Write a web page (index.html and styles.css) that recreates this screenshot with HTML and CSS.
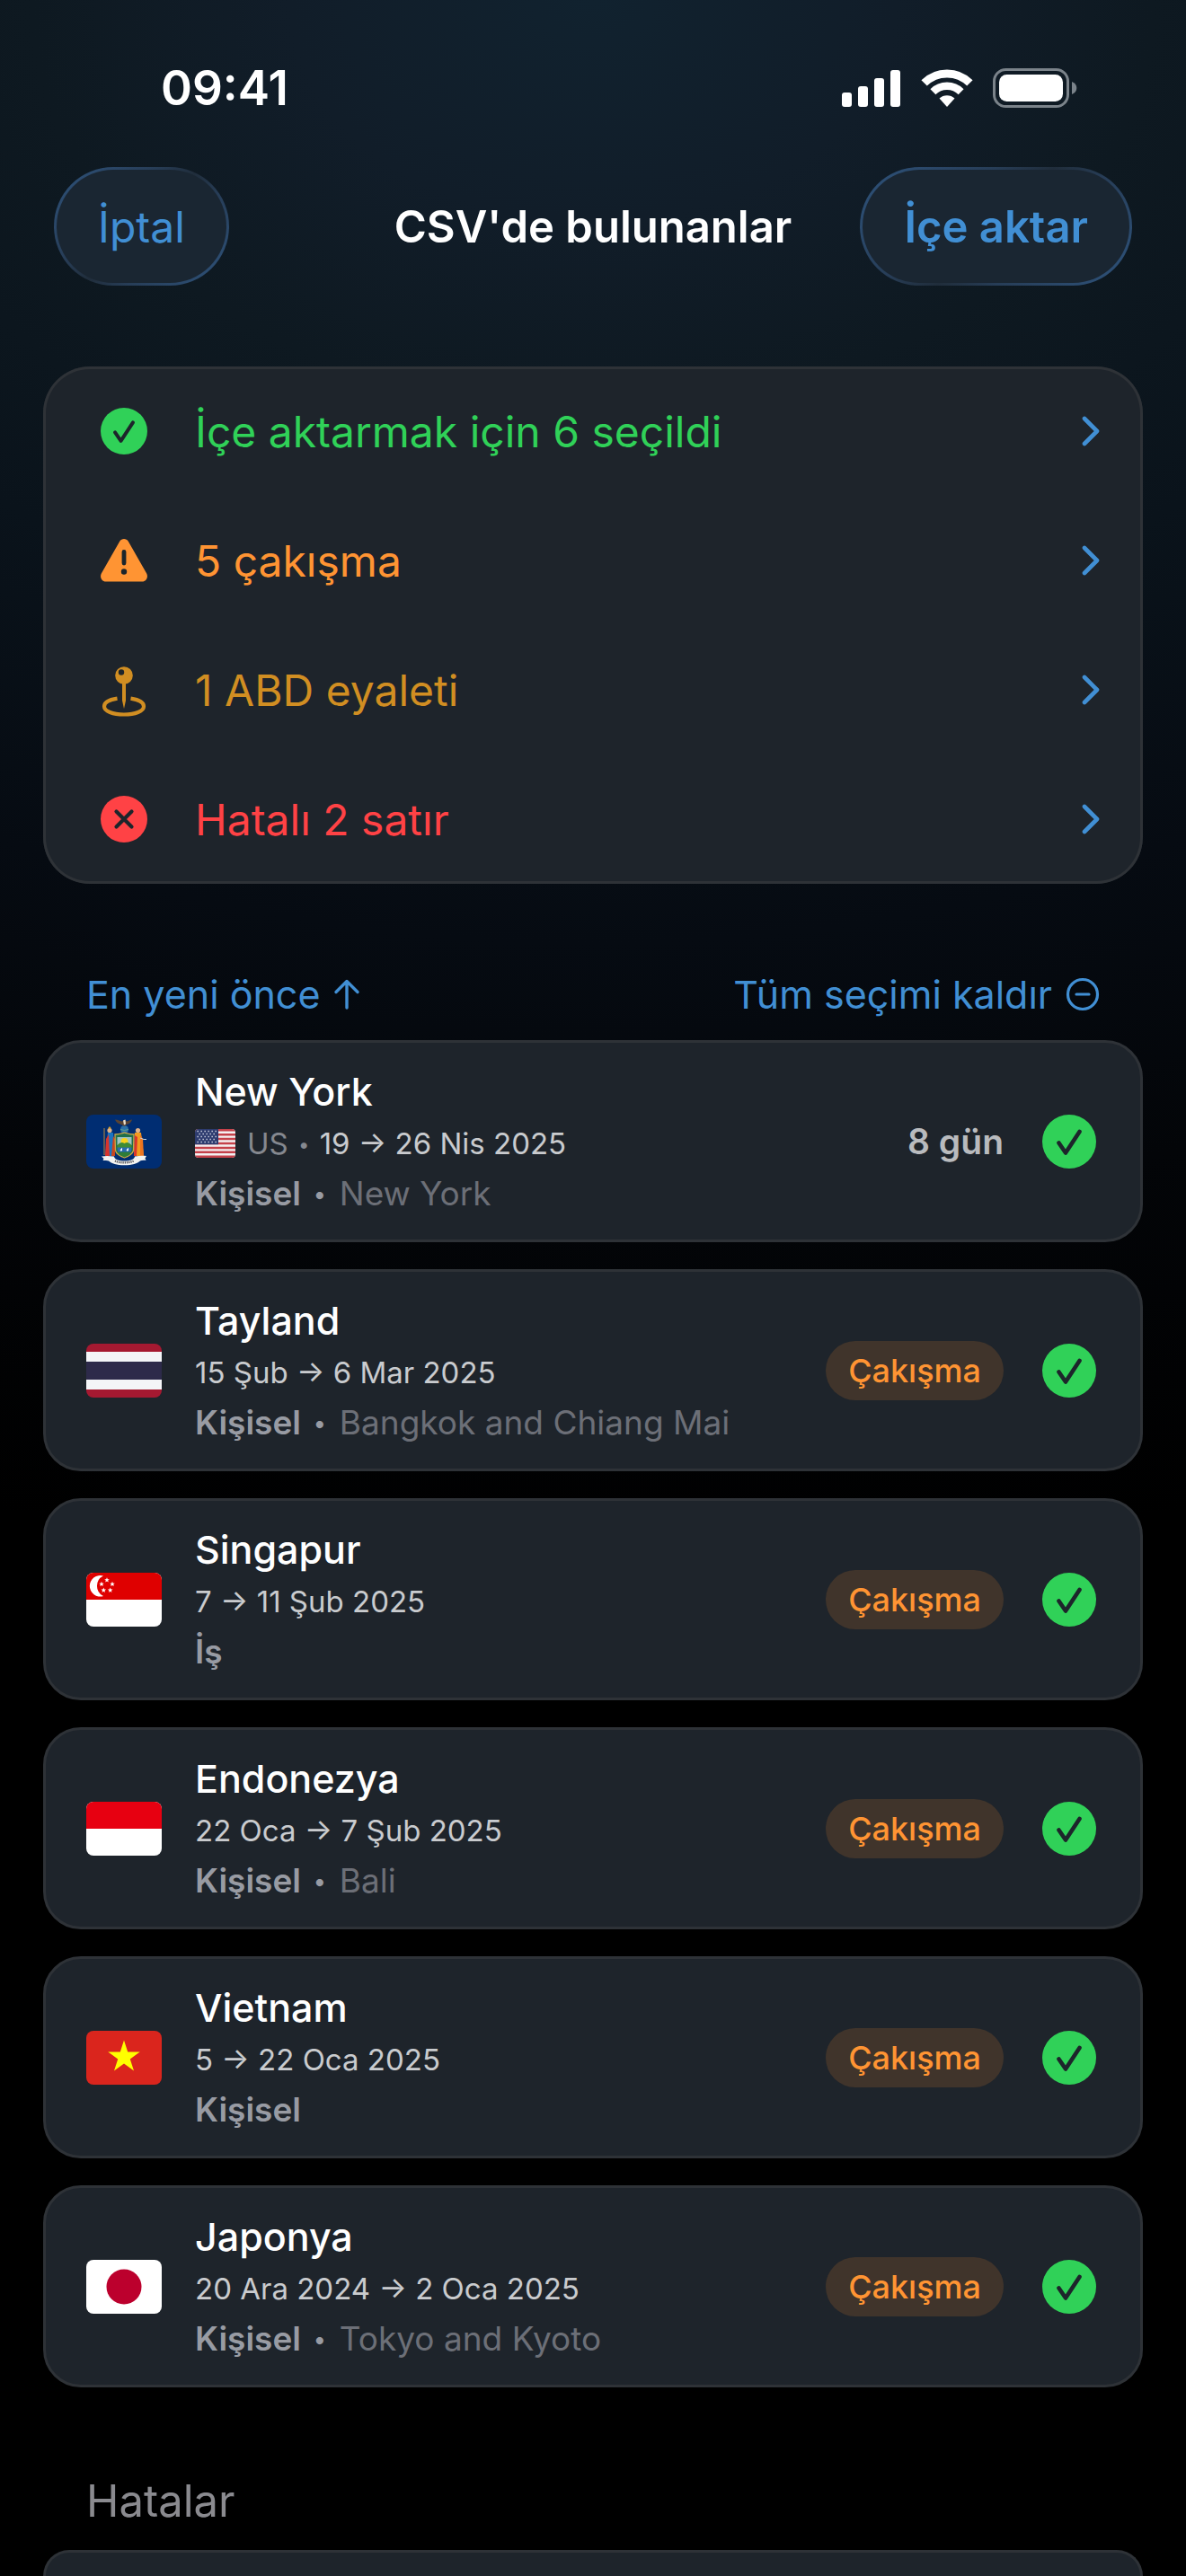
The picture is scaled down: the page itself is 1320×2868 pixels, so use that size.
FILE: index.html
```html
<!DOCTYPE html>
<html lang="tr">
<head>
    <meta charset="UTF-8">
    <meta name="viewport" content="width=device-width, initial-scale=1.0">
    <title>CSV'de bulunanlar</title>
    <link rel="stylesheet" href="styles.css">
</head>
<body>
    <svg class="defs" aria-hidden="true">
        <symbol id="check" viewBox="0 0 60 60">
            <circle cx="30" cy="30" r="30" fill="#30d158"/>
            <path d="M18.5 31.5 26 42.5 41.5 19" fill="none" stroke="#1d252b" stroke-width="4.6" stroke-linecap="round" stroke-linejoin="round"/>
        </symbol>
        <symbol id="chevron" viewBox="0 0 20 34">
            <path d="M3 3 17 17 3 31" fill="none" stroke="#418fd4" stroke-width="4.6" stroke-linecap="round" stroke-linejoin="round"/>
        </symbol>
    </svg>

    <div class="status-bar">
        <span class="time">09:41</span>
        <div class="status-icons">
            <svg width="66" height="42" viewBox="0 0 66 42" fill="#fff">
                <rect x="0" y="26" width="11" height="16" rx="3"/>
                <rect x="18" y="19" width="11" height="23" rx="3"/>
                <rect x="36" y="10" width="11" height="32" rx="3"/>
                <rect x="54" y="1" width="11" height="41" rx="3"/>
            </svg>
            <svg width="58" height="42" viewBox="0 0 58 42">
                <path d="M3.6 15.4a36 36 0 0 1 50.8 0" fill="none" stroke="#fff" stroke-width="9"/>
                <path d="M13.4 25.2a22.2 22.2 0 0 1 31.2 0" fill="none" stroke="#fff" stroke-width="8.4"/>
                <path d="M20.5 32.6a12.2 12.2 0 0 1 17 0L29 42z" fill="#fff"/>
            </svg>
            <svg width="94" height="44" viewBox="0 0 94 44">
                <rect x="1.5" y="1.5" width="82" height="41" rx="13" fill="none" stroke="#7b838a" stroke-width="3"/>
                <rect x="7" y="7" width="71" height="30" rx="8.5" fill="#fff"/>
                <path d="M88 15c3.4 1.2 5.3 4 5.3 7s-1.9 5.8-5.3 7z" fill="#7b838a"/>
            </svg>
        </div>
    </div>

    <header class="nav">
        <button class="nav-btn" type="button">İptal</button>
        <h1>CSV'de bulunanlar</h1>
        <button class="nav-btn nav-btn-main" type="button">İçe aktar</button>
    </header>

    <main>
        <section class="summary">
            <button class="summary-row green" type="button">
                <svg class="summary-icon" width="52" height="52"><use href="#check"/></svg>
                <span>İçe aktarmak için 6 seçildi</span>
                <svg width="20" height="34"><use href="#chevron"/></svg>
            </button>
            <button class="summary-row orange" type="button">
                <svg class="summary-icon" width="54" height="48" viewBox="0 0 54 48">
                    <path d="M22.2 2.8c2.1-3.7 7.5-3.7 9.6 0l20.400 35.800c2.100 3.700-.5 8.900-5 8.900H6.800c-4.500 0-7.100-5.200-5-8.900z" fill="#ff9433"/>
                    <path d="M27 14.500V27" stroke="#1d252b" stroke-width="4.800" stroke-linecap="round"/>
                    <circle cx="27" cy="36.500" r="3.200" fill="#1d252b"/>
                </svg>
                <span>5 çakışma</span>
                <svg width="20" height="34"><use href="#chevron"/></svg>
            </button>
            <button class="summary-row amber" type="button">
                <svg class="summary-icon" width="54" height="60" viewBox="0 0 54 60">
                    <path d="M19.500 39.600C10 41 5 44.300 5 48.500 5 54 14.500 57.500 27 57.500S49 54 49 48.500c0-4.200-5-7.500-14.500-8.900" fill="none" stroke="#d18e22" stroke-width="4.200"/>
                    <path d="M25 22h4v20l-2 9-2-9z" fill="#d18e22"/>
                    <circle cx="27" cy="14" r="9.800" fill="#d18e22"/>
                    <circle cx="24" cy="10.500" r="3.200" fill="#1d252b"/>
                </svg>
                <span>1 ABD eyaleti</span>
                <svg width="20" height="34"><use href="#chevron"/></svg>
            </button>
            <button class="summary-row red" type="button">
                <svg class="summary-icon" width="52" height="52" viewBox="0 0 52 52">
                    <circle cx="26" cy="26" r="26" fill="#ff4245"/>
                    <path d="M17.500 17.500l17 17M34.500 17.500l-17 17" stroke="#1d252b" stroke-width="4.200" stroke-linecap="round"/>
                </svg>
                <span>Hatalı 2 satır</span>
                <svg width="20" height="34"><use href="#chevron"/></svg>
            </button>
        </section>

        <div class="toolbar">
            <button type="button">En yeni önce
                <svg width="30" height="34" viewBox="0 0 30 34" fill="none" stroke="#418fd4" stroke-width="3.400" stroke-linecap="round" stroke-linejoin="round"><path d="M15 32V2.500M3 14.500l12-12 12 12"/></svg>
            </button>
            <button type="button">Tüm seçimi kaldır
                <svg width="38" height="38" viewBox="0 0 38 38" fill="none" stroke="#418fd4" stroke-width="3.200" stroke-linecap="round"><circle cx="19" cy="19" r="16.500"/><path d="M12 19h14"/></svg>
            </button>
        </div>

        <ul class="trips">
            <li class="card">
                <svg class="flag" viewBox="0 0 84 60">
                    <rect width="84" height="60" fill="#002d72"/>
                    <!-- supporters -->
                    <path d="M20 15v30" stroke="#b98a3a" stroke-width="1"/>
                    <path d="M24 20l6 0 2 26H21z" fill="#1c74c0"/>
                    <path d="M22 27l3-5 1 24h-5z" fill="#d8342c"/>
                    <path d="M30 24l2 3v19h-4z" fill="#c9461f"/>
                    <circle cx="26" cy="17.500" r="2.600" fill="#e0b28a"/>
                    <path d="M24 15.500l2-2.500 2 2.500z" fill="#d9a32b"/>
                    <path d="M54 20h7l3 26H53z" fill="#f19a1f"/>
                    <path d="M54 23l3 2-1 21h-3z" fill="#d8342c"/>
                    <path d="M60 22l3 5 1 19h-4z" fill="#ec7420"/>
                    <circle cx="57.500" cy="17.500" r="2.600" fill="#e0b28a"/>
                    <path d="M60 26l4 1.500M64 27.500h3" stroke="#cfd6df" stroke-width="1"/>
                    <!-- globe and eagle -->
                    <circle cx="42.500" cy="16.500" r="4.500" fill="#2a71a8"/>
                    <path d="M38 16.500q4.500 2 9 0" fill="none" stroke="#63a08b" stroke-width="1"/>
                    <path d="M32 5.500c3 0 5 1.500 8 2l2.500-2 2.500 2c3-.5 4-2 6-2-1 3-3 5-6 5.500L42.500 13 39 11c-3-.5-6-2.500-7-5.500z" fill="#5a4332"/>
                    <path d="M41 6.500l2.500-1 .5 5-2 1z" fill="#e8dfcd"/>
                    <!-- shield -->
                    <path d="M32 22c4 0 7-1 10.500-2 3.500 1 6.500 2 10.500 2l-.5 18c-1 4-5 6-10 8-5-2-9-4-10-8z" fill="#1f6f4a" stroke="#c9a648" stroke-width="1.300"/>
                    <path d="M34.500 25h16v9h-16z" fill="#9fc4c2"/>
                    <circle cx="42.500" cy="30" r="4" fill="#f8d21c"/>
                    <path d="M34.500 34q4-5 8-2 4-3 8 2v3h-16z" fill="#3f8b35"/>
                    <path d="M34.500 36.500h16l-.5 5h-15z" fill="#2b6cae"/>
                    <path d="M38 40l1.500-2.500v2.500zM45 40l1.500-2.500v2.500z" fill="#fff" stroke="#fff"/>
                    <path d="M35 42h15l-2 3-5.500 2.200L37 45z" fill="#2f7d38"/>
                    <!-- motto ribbon -->
                    <path d="M17 46.500c5-1 9-.5 14 0 0 3 5 5 11.500 5S54 49.500 54 46.500c5-.5 8-1 13-.5l-1.500 2.500 1 2.500c-3-.5-5 0-6.500.500-3 3-9 4.800-17.500 4.800S28 54.500 25 51.500c-2-.5-4-.5-6.500-.5l1-2z" fill="#f3f3f1"/>
                    <path d="M32 51.500c5 2.600 15 2.600 21 0" fill="none" stroke="#4b4b50" stroke-width="2.200" stroke-dasharray="1.200 1"/>
                </svg>
                <div class="info">
                    <h2>New York</h2>
                    <p class="dates">
                        <svg class="mini-flag" viewBox="0 0 45 32">
                            <rect width="45" height="32" fill="#f4f1f2"/>
                            <path d="M0 1.200h45M0 6.200h45M0 11.100h45M0 16h45M0 20.900h45M0 25.800h45M0 30.800h45" stroke="#c5414a" stroke-width="2.460"/>
                            <rect width="26" height="17.200" fill="#2d3b6e"/>
                            <path d="M2.500 2.500h22M2.500 8.500h22M2.500 14.500h22" stroke="#dfe2ee" stroke-width="1.300" stroke-dasharray="1.300 2.700"/>
                            <path d="M4.500 5.500h18M4.500 11.500h18" stroke="#dfe2ee" stroke-width="1.300" stroke-dasharray="1.300 2.700"/>
                        </svg>
                        <span><span class="country">US <span class="dot">•</span></span> 19 → 26 Nis 2025</span>
                    </p>
                    <p class="note"><strong>Kişisel <span class="dot">•</span></strong> New York</p>
                </div>
                <span class="days">8 gün</span>
                <label class="tick"><input type="checkbox" checked aria-label="New York"><svg width="60" height="60"><use href="#check"/></svg></label>
            </li>
            <li class="card">
                <svg class="flag" viewBox="0 0 84 60">
                    <rect width="84" height="60" fill="#a51931"/>
                    <rect y="9" width="84" height="42" fill="#f4f5f8"/>
                    <rect y="20" width="84" height="20" fill="#2d2a4a"/>
                </svg>
                <div class="info">
                    <h2>Tayland</h2>
                    <p class="dates">15 Şub → 6 Mar 2025</p>
                    <p class="note"><strong>Kişisel <span class="dot">•</span></strong> Bangkok and Chiang Mai</p>
                </div>
                <span class="badge">Çakışma</span>
                <label class="tick"><input type="checkbox" checked aria-label="Tayland"><svg width="60" height="60"><use href="#check"/></svg></label>
            </li>
            <li class="card">
                <svg class="flag" viewBox="0 0 84 60">
                    <rect width="84" height="60" fill="#fff"/>
                    <rect width="84" height="30" fill="#df0000"/>
                    <path d="M19 3.500a11.800 11.800 0 1 0 0 22.600 12.600 12.600 0 0 1 0-22.600z" fill="#fff"/>
                    <g fill="#fff">
                        <path id="st" d="M23 5.300l.8 1.900 2 .1-1.600 1.300.6 2-1.800-1.100-1.800 1.100.6-2-1.600-1.300 2-.1z"/>
                        <use href="#st" x="-6" y="4.500"/>
                        <use href="#st" x="6" y="4.500"/>
                        <use href="#st" x="-3.700" y="11.300"/>
                        <use href="#st" x="3.700" y="11.300"/>
                    </g>
                </svg>
                <div class="info">
                    <h2>Singapur</h2>
                    <p class="dates">7 → 11 Şub 2025</p>
                    <p class="note"><strong>İş</strong></p>
                </div>
                <span class="badge">Çakışma</span>
                <label class="tick"><input type="checkbox" checked aria-label="Singapur"><svg width="60" height="60"><use href="#check"/></svg></label>
            </li>
            <li class="card">
                <svg class="flag" viewBox="0 0 84 60">
                    <rect width="84" height="60" fill="#fff"/>
                    <rect width="84" height="30" fill="#e70011"/>
                </svg>
                <div class="info">
                    <h2>Endonezya</h2>
                    <p class="dates">22 Oca → 7 Şub 2025</p>
                    <p class="note"><strong>Kişisel <span class="dot">•</span></strong> Bali</p>
                </div>
                <span class="badge">Çakışma</span>
                <label class="tick"><input type="checkbox" checked aria-label="Endonezya"><svg width="60" height="60"><use href="#check"/></svg></label>
            </li>
            <li class="card">
                <svg class="flag" viewBox="0 0 84 60">
                    <rect width="84" height="60" fill="#da251d"/>
                    <path d="M42 10.500l4.200 12.900h13.600l-11 8 4.200 13-11-8-11 8 4.200-13-11-8h13.600z" fill="#ff0"/>
                </svg>
                <div class="info">
                    <h2>Vietnam</h2>
                    <p class="dates">5 → 22 Oca 2025</p>
                    <p class="note"><strong>Kişisel</strong></p>
                </div>
                <span class="badge">Çakışma</span>
                <label class="tick"><input type="checkbox" checked aria-label="Vietnam"><svg width="60" height="60"><use href="#check"/></svg></label>
            </li>
            <li class="card">
                <svg class="flag" viewBox="0 0 84 60">
                    <rect width="84" height="60" fill="#fff"/>
                    <circle cx="42" cy="30" r="19.500" fill="#bc002d"/>
                </svg>
                <div class="info">
                    <h2>Japonya</h2>
                    <p class="dates">20 Ara 2024 → 2 Oca 2025</p>
                    <p class="note"><strong>Kişisel <span class="dot">•</span></strong> Tokyo and Kyoto</p>
                </div>
                <span class="badge">Çakışma</span>
                <label class="tick"><input type="checkbox" checked aria-label="Japonya"><svg width="60" height="60"><use href="#check"/></svg></label>
            </li>
        </ul>

        <section class="errors">
            <h2>Hatalar</h2>
            <div class="errors-card"></div>
        </section>
    </main>
</body>
</html>
```

FILE: styles.css
```css
* {
    box-sizing: border-box;
}

body, h1, h2, p, ul {
    margin: 0;
    padding: 0;
}

body {
    display: flex;
    flex-direction: column;
    min-height: 100vh;
    font-family: Inter, "Liberation Sans", sans-serif;
    font-size: 48px;
    color: #fff;
    background: radial-gradient(ellipse 2400px 1750px at 50% 0, #11222f 0%, #111d29 14%, #0e1921 26%, #0a131b 42%, #060b12 60%, #030508 78%, #000 100%) no-repeat #000;
}

button {
    font: inherit;
    color: inherit;
    border: 0;
    padding: 0;
    background: none;
    cursor: pointer;
}

svg {
    display: block;
    flex: none;
}

.defs {
    position: absolute;
    width: 0;
    height: 0;
}

.status-bar {
    display: flex;
    justify-content: space-between;
    align-items: center;
    padding: 65px 121px 55px 179px;
}

.time {
    line-height: 66px;
    font-size: 53px;
    font-weight: 600;
}

.status-icons {
    display: flex;
    align-items: center;
    gap: 22px;
}

.nav {
    display: grid;
    grid-template-columns: 1fr auto 1fr;
    align-items: center;
    padding: 0 60px;
}

.nav h1 {
    font-size: 49px;
    font-weight: 600;
}

.nav-btn {
    justify-self: start;
    height: 132px;
    padding: 0 46px;
    border: 3px solid transparent;
    border-radius: 66px;
    color: #418fd4;
    background:
        linear-gradient(#1a2632, #1a2632) padding-box,
        linear-gradient(135deg, #2c4d72 10%, #273d57 35%, #202d3b 50%, #273d57 65%, #2c4d72 90%) border-box;
}

.nav-btn-main {
    justify-self: end;
    font-size: 49px;
    font-weight: 600;
}

main {
    display: flex;
    flex-direction: column;
    flex: 1;
    padding: 90px 48px 0;
}

.card, .errors-card {
    border: 3px solid #2e3237;
    background: #1e242b;
}

.summary {
    display: flex;
    flex-direction: column;
    padding: 0 48px;
    border-radius: 52px;
    background: #1e242b;
    box-shadow: inset 0 0 0 3px #2e3237;
}

.summary-row {
    display: flex;
    align-items: center;
    height: 144px;
    text-align: left;
}

.summary-row span {
    flex: 1;
    margin-left: 37px;
}

.summary-icon {
    width: 84px;
}

.green {
    color: #30d158;
}

.orange {
    color: #ff9433;
}

.amber {
    color: #d18e22;
}

.red {
    color: #ff4245;
}

.toolbar {
    display: flex;
    justify-content: space-between;
    padding: 93px 48px 21px;
    color: #418fd4;
    font-size: 43px;
    line-height: 60px;
}

.toolbar button {
    display: flex;
    align-items: center;
    gap: 15px;
}

.trips {
    display: flex;
    flex-direction: column;
    gap: 30px;
    list-style: none;
}

.card {
    display: flex;
    align-items: center;
    height: 225px;
    padding: 0 49px 0 45px;
    border-radius: 42px;
}

.flag {
    width: 84px;
    height: 60px;
    border-radius: 8px;
}

.info {
    flex: 1;
    margin-left: 37px;
}

.card h2 {
    font-size: 43px;
    font-weight: 500;
    line-height: 60px;
}

.dates {
    display: flex;
    align-items: center;
    gap: 13px;
    font-size: 33px;
    line-height: 56px;
    color: #c9cbce;
}

.mini-flag {
    width: 45px;
    height: 32px;
    border-radius: 4px;
}

.country {
    color: #85888f;
}

.dot {
    margin: 0 2px;
    font-size: 22px;
    line-height: 1;
    vertical-align: 3px;
}

.note {
    font-size: 37px;
    line-height: 56px;
    color: #6c6f77;
}

.note strong {
    font-weight: 600;
    color: #989ba3;
}

.note .dot {
    margin: 0 5px;
    font-size: 26px;
}

.days {
    font-size: 39px;
    font-weight: 600;
    color: #b9bbbe;
}

.badge {
    padding: 0 25px;
    border-radius: 33px;
    font-size: 36px;
    font-weight: 500;
    line-height: 66px;
    color: #ff9433;
    background: #40342b;
}

.tick {
    position: relative;
    margin-left: 43px;
    cursor: pointer;
}

.tick input {
    position: absolute;
    inset: 0;
    margin: 0;
    opacity: 0;
}

.errors {
    display: flex;
    flex-direction: column;
    flex: 1;
}

.errors h2 {
    margin: 97px 48px 24px;
    font-size: 49px;
    font-weight: 400;
    line-height: 60px;
    color: #8a8a8f;
}

.errors-card {
    flex: 1;
    border-bottom: 0;
    border-radius: 52px 52px 0 0;
}
```
